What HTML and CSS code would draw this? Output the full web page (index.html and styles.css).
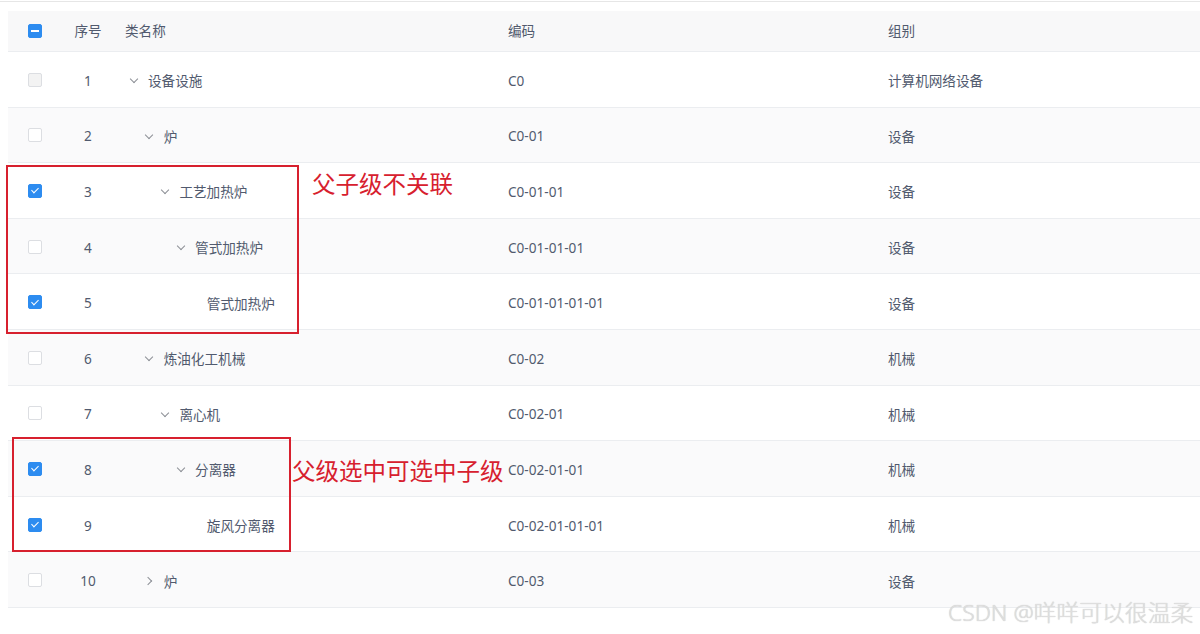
FILE: index.html
```html
<!DOCTYPE html>
<html lang="zh">
<head>
<meta charset="utf-8">
<title>树形表格</title>
<link rel="stylesheet" href="styles.css">
</head>
<body>
<div class="page">
  <div class="topline"></div>
  <div class="table">
    <div class="row head">
      <div class="cell c-check"><span class="cb indeterminate"></span></div>
      <div class="cell c-index">序号</div>
      <div class="cell c-name">类名称</div>
      <div class="cell c-code">编码</div>
      <div class="cell c-group">组别</div>
    </div>

    <div class="row">
      <div class="cell c-check"><span class="cb disabled"></span></div>
      <div class="cell c-index">1</div>
      <div class="cell c-name"><span class="indent lvl-0"></span><span class="arrow down"></span><span class="label">设备设施</span></div>
      <div class="cell c-code">C0</div>
      <div class="cell c-group">计算机网络设备</div>
    </div>

    <div class="row alt">
      <div class="cell c-check"><span class="cb"></span></div>
      <div class="cell c-index">2</div>
      <div class="cell c-name"><span class="indent lvl-1"></span><span class="arrow down"></span><span class="label">炉</span></div>
      <div class="cell c-code">C0-01</div>
      <div class="cell c-group">设备</div>
    </div>

    <div class="row">
      <div class="cell c-check"><span class="cb checked"></span></div>
      <div class="cell c-index">3</div>
      <div class="cell c-name"><span class="indent lvl-2"></span><span class="arrow down"></span><span class="label">工艺加热炉</span></div>
      <div class="cell c-code">C0-01-01</div>
      <div class="cell c-group">设备</div>
    </div>

    <div class="row alt">
      <div class="cell c-check"><span class="cb"></span></div>
      <div class="cell c-index">4</div>
      <div class="cell c-name"><span class="indent lvl-3"></span><span class="arrow down"></span><span class="label">管式加热炉</span></div>
      <div class="cell c-code">C0-01-01-01</div>
      <div class="cell c-group">设备</div>
    </div>

    <div class="row">
      <div class="cell c-check"><span class="cb checked"></span></div>
      <div class="cell c-index">5</div>
      <div class="cell c-name"><span class="indent lvl-4"></span><span class="leaf"></span><span class="label">管式加热炉</span></div>
      <div class="cell c-code">C0-01-01-01-01</div>
      <div class="cell c-group">设备</div>
    </div>

    <div class="row alt">
      <div class="cell c-check"><span class="cb"></span></div>
      <div class="cell c-index">6</div>
      <div class="cell c-name"><span class="indent lvl-1"></span><span class="arrow down"></span><span class="label">炼油化工机械</span></div>
      <div class="cell c-code">C0-02</div>
      <div class="cell c-group">机械</div>
    </div>

    <div class="row">
      <div class="cell c-check"><span class="cb"></span></div>
      <div class="cell c-index">7</div>
      <div class="cell c-name"><span class="indent lvl-2"></span><span class="arrow down"></span><span class="label">离心机</span></div>
      <div class="cell c-code">C0-02-01</div>
      <div class="cell c-group">机械</div>
    </div>

    <div class="row alt">
      <div class="cell c-check"><span class="cb checked"></span></div>
      <div class="cell c-index">8</div>
      <div class="cell c-name"><span class="indent lvl-3"></span><span class="arrow down"></span><span class="label">分离器</span></div>
      <div class="cell c-code">C0-02-01-01</div>
      <div class="cell c-group">机械</div>
    </div>

    <div class="row">
      <div class="cell c-check"><span class="cb checked"></span></div>
      <div class="cell c-index">9</div>
      <div class="cell c-name"><span class="indent lvl-4"></span><span class="leaf"></span><span class="label">旋风分离器</span></div>
      <div class="cell c-code">C0-02-01-01-01</div>
      <div class="cell c-group">机械</div>
    </div>

    <div class="row alt">
      <div class="cell c-check"><span class="cb"></span></div>
      <div class="cell c-index">10</div>
      <div class="cell c-name"><span class="indent lvl-1"></span><span class="arrow right"></span><span class="label">炉</span></div>
      <div class="cell c-code">C0-03</div>
      <div class="cell c-group">设备</div>
    </div>
  </div>

  <div class="mark mark-1"></div>
  <div class="note note-1">父子级不关联</div>
  <div class="mark mark-2"></div>
  <div class="note note-2">父级选中可选中子级</div>
  <div class="watermark">CSDN @咩咩可以很温柔</div>
</div>
</body>
</html>
```

FILE: styles.css
```css
* { box-sizing: border-box; }
html, body {
  margin: 0;
  padding: 0;
  background: #fff;
}
body {
  width: 1200px;
  height: 634px;
  overflow: hidden;
  font-family: "Noto Sans", "Noto Sans CJK SC", sans-serif;
  font-size: 13.6px;
  color: #515a6e;
}
.page {
  position: relative;
  width: 1200px;
  height: 634px;
}
.topline {
  height: 2px;
  border-top: 1px solid #e6e6e6;
  margin-top: 1px;
  margin-bottom: 8px;
}
.table {
  margin-left: 8px;
  width: 1192px;
}
.row {
  display: grid;
  grid-template-columns: 54px 52px 383px 380px 1fr;
  height: 55.6px;
  border-bottom: 1px solid #ebedf0;
  background: #fff;
  padding-top: 2px;
}
.row.alt { background: #fafafb; }
.row.head {
  height: 41px;
  background: #f8f8f9;
  padding-top: 0;
}
.row.head .cell { padding-bottom: 2px; }
.row.head .c-check { padding-bottom: 0; }
.cell {
  display: flex;
  align-items: center;
  white-space: nowrap;
}
.c-check { justify-content: center; }
.row .c-check { margin-top: -1px; }
.c-index { justify-content: center; }
.c-name { padding-left: 11px; }
.c-code, .c-group { padding-left: 11px; }

.cb {
  width: 14px;
  height: 14px;
  border: 1px solid #dcdee2;
  border-radius: 2px;
  background: #fff;
  position: relative;
}
.cb.disabled { background: #f3f3f3; }
.cb.checked, .cb.indeterminate {
  background: #2d8cf0;
  border-color: #2d8cf0;
}
.cb.checked::after {
  content: "";
  position: absolute;
  left: 4px;
  top: 1.5px;
  width: 3px;
  height: 6px;
  border: 1.5px solid #fff;
  border-top: 0;
  border-left: 0;
  transform: rotate(45deg);
}
.cb.indeterminate::after {
  content: "";
  position: absolute;
  left: 2px;
  top: 5px;
  width: 8px;
  height: 2px;
  background: #fff;
}

.indent { display: inline-block; flex: none; height: 1px; }
.lvl-0 { width: 0; }
.lvl-1 { width: 15.7px; }
.lvl-2 { width: 31.4px; }
.lvl-3 { width: 47.1px; }
.lvl-4 { width: 62.8px; }

.arrow {
  flex: none;
  width: 16px;
  height: 16px;
  margin-right: 7px;
  position: relative;
}
.arrow::after {
  content: "";
  position: absolute;
  width: 5px;
  height: 5px;
  border-right: 1px solid #8c8f96;
  border-bottom: 1px solid #8c8f96;
}
.arrow.down::after {
  left: 5.5px;
  top: 4px;
  transform: rotate(45deg);
}
.arrow.right::after {
  left: 4px;
  top: 5.5px;
  transform: rotate(-45deg);
}
.leaf {
  flex: none;
  width: 19px;
}

.mark {
  position: absolute;
  border: 2px solid #d7202e;
}
.mark-1 {
  left: 6px;
  top: 164px;
  width: 293px;
  height: 169px;
}
.mark-2 {
  left: 12px;
  top: 436px;
  width: 279px;
  height: 115px;
}
.note {
  position: absolute;
  color: #d7202e;
  font-family: "Noto Sans CJK SC", sans-serif;
  white-space: nowrap;
  line-height: 1;
}
.note-1 {
  left: 312px;
  top: 171px;
  font-size: 23.5px;
}
.note-2 {
  left: 292px;
  top: 458px;
  font-size: 23.5px;
}
.watermark {
  position: absolute;
  left: 948px;
  top: 598px;
  font-family: "Noto Sans", "Noto Sans CJK SC", sans-serif;
  font-size: 22.8px;
  font-weight: 300;
  line-height: 1.25;
  color: #dedede;
  text-shadow: 0 0 1px #c4c4c4;
  white-space: nowrap;
}
```
